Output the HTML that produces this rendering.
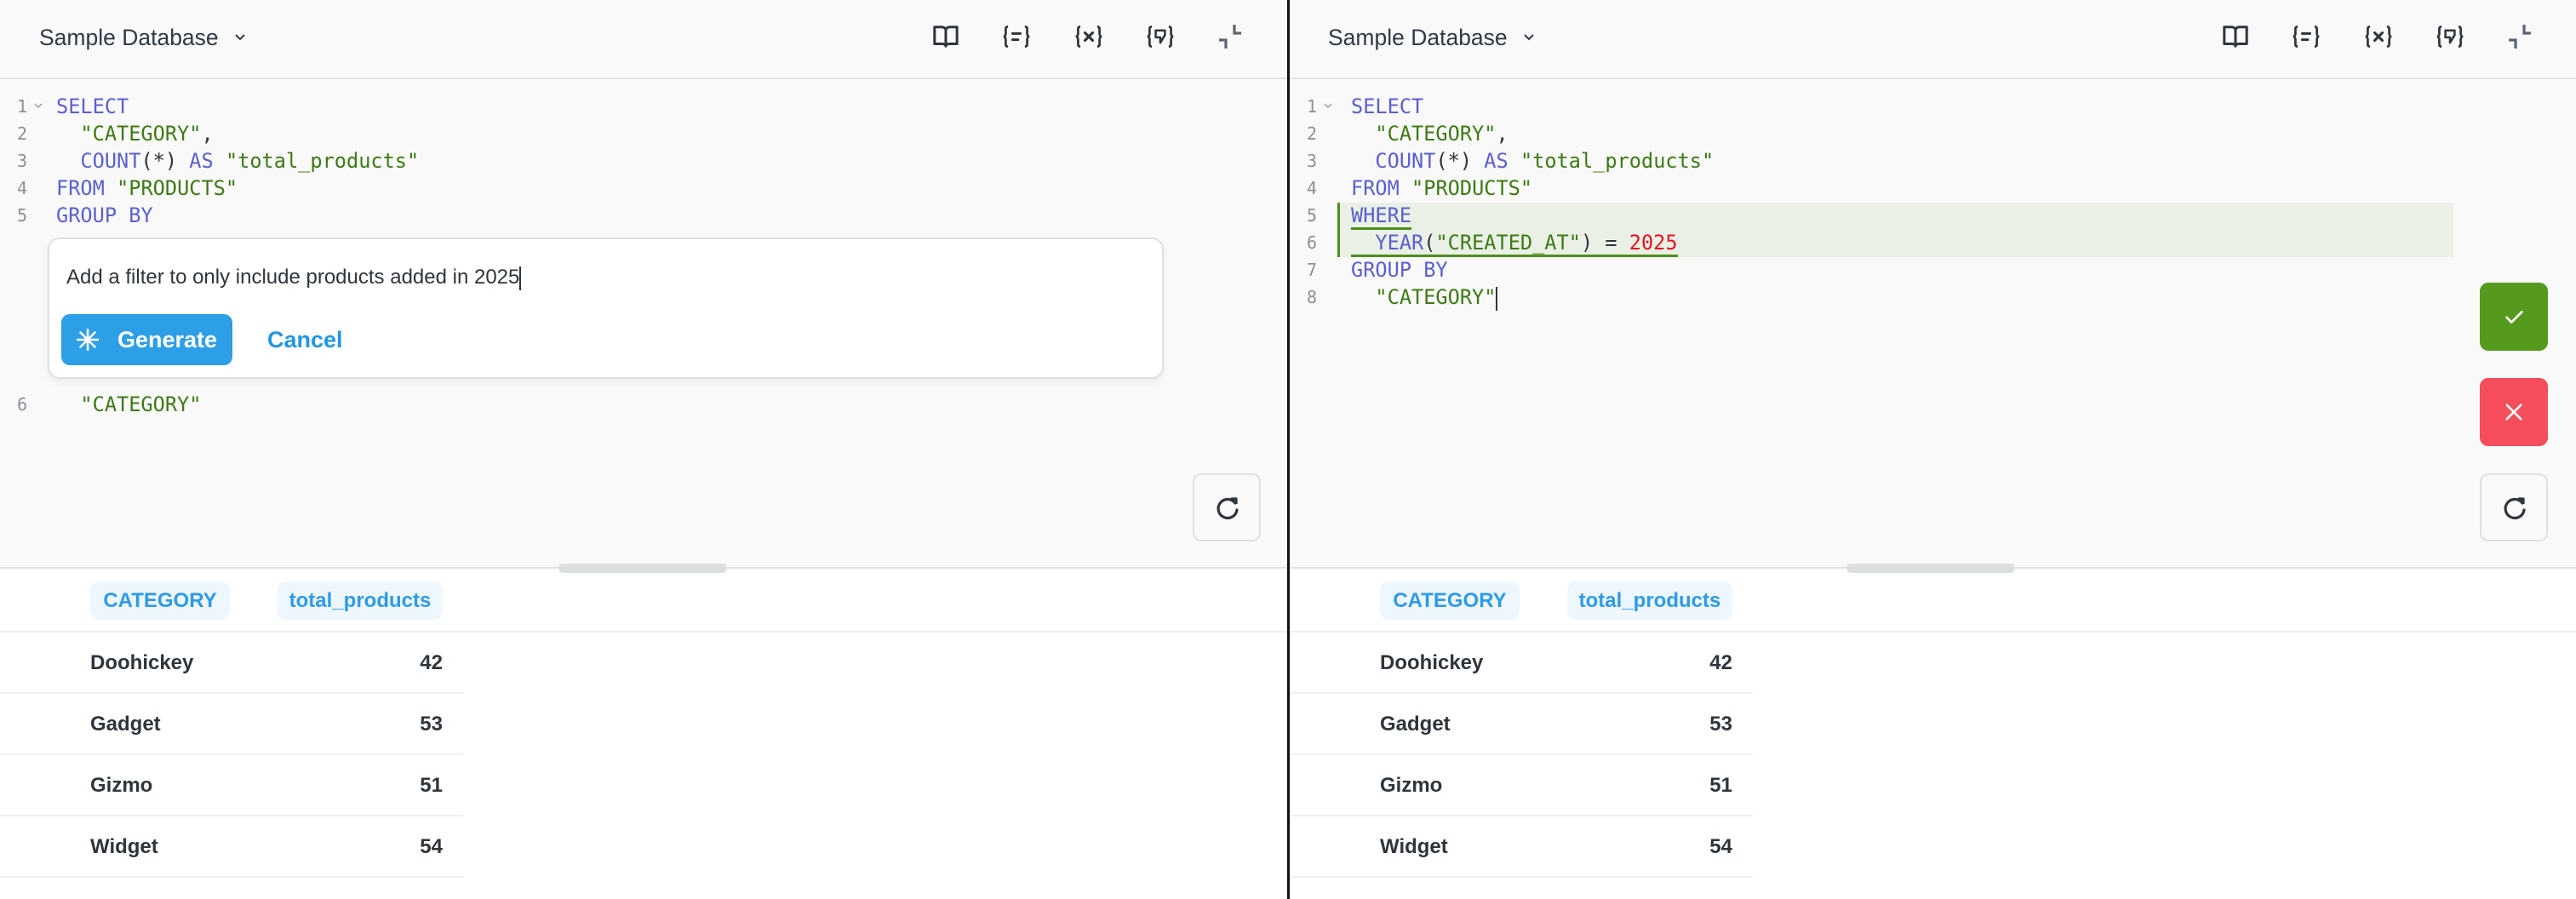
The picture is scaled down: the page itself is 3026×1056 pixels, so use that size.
<!DOCTYPE html>
<html><head><meta charset="utf-8">
<style>
*{margin:0;padding:0;box-sizing:border-box}
html,body{width:3026px;height:1056px;overflow:hidden;background:#fff;font-family:"Liberation Sans",sans-serif}
.panel{position:absolute;top:0;width:1512px;height:1056px;background:#fff;overflow:hidden}
.top{position:absolute;left:0;top:0;width:100%;height:668px;background:#f9f9f9;border-bottom:2px solid #e2e2e2}
.hdr{position:absolute;left:0;top:0;width:100%;height:93px;border-bottom:2px solid #e4e4e4}
.db{position:absolute;left:46px;top:27px;font-size:26.5px;color:#2e3a47;line-height:34px}
.db svg{position:absolute;left:229px;top:12px}
.ico{position:absolute;top:27px}
.code{position:absolute;left:0;top:109px;font-family:"DejaVu Sans Mono",monospace;font-size:23.6px}
.ln{position:absolute;height:32px;line-height:32px;white-space:pre}
.num{position:absolute;left:20px;width:20px;color:#8a9096;font-size:20px;line-height:32px}
.k{color:#5a5fd0}.s{color:#3d7a14}.p{color:#2e353b}.r{color:#e3121e}
.prompt{position:absolute;left:56px;top:279px;width:1311px;height:166px;background:#fff;border:2px solid #e0e0e0;border-radius:14px;box-shadow:0 4px 10px rgba(0,0,0,.06)}
.gen{position:absolute;left:14px;top:88px;width:201px;height:60px;background:#2d9fe6;border-radius:10px;color:#fff;font-size:27px;font-weight:bold;line-height:60px;padding-left:66px}
.gen svg{position:absolute;left:18px;top:17px}
.cancel{position:absolute;left:256px;top:88px;line-height:60px;font-size:27px;font-weight:bold;color:#2196e3}
.btn{position:absolute;width:80px;height:80px;border-radius:10px}
.refresh{background:#f9f9f9;border:2px solid #e0e0e0}
.handle{position:absolute;left:656px;top:662px;width:198px;height:11px;background:#dcdfe0;border-radius:6px}
.pill{position:absolute;top:683px;height:45px;background:#eef6fe;border-radius:10px;color:#2d9be6;font-weight:bold;font-size:24px;line-height:45px;text-align:center}
.hline{position:absolute;left:0;top:741px;width:100%;height:2px;background:#eeeeee}
.row{position:absolute;left:0;width:544px;height:72px;border-bottom:2px solid #f0f0f0;font-size:24px;font-weight:bold;color:#2e353b}
.row .a{position:absolute;left:106px;top:22px}
.row .b{position:absolute;right:24px;top:22px}
</style></head><body>

<!-- LEFT PANEL -->
<div class="panel" style="left:0">
 <div class="top">
  <div class="hdr">
   <div class="db">Sample Database<svg width="14" height="10" viewBox="0 0 14 10"><path d="M2 2l5 5 5-5" stroke="#2e3a47" stroke-width="2" fill="none"/></svg></div>
   <svg class="ico" style="left:1095px" width="32" height="32" viewBox="0 0 34 34"><path d="M3 5h9c3 0 5 2 5 4v20c0-2-2-3-5-3H3z M31 5h-9c-3 0-5 2-5 4v20c0-2 2-3 5-3h9z" stroke="#2e353b" stroke-width="3.2" fill="none" stroke-linejoin="round"/></svg>
   <svg class="ico" style="left:1176px" width="36" height="32" viewBox="0 0 40 34"><path d="M9 4c-2 0-3 1-3 3v6c0 2-1 4-3 4 2 0 3 2 3 4v6c0 2 1 3 3 3M31 4c2 0 3 1 3 3v6c0 2 1 4 3 4-2 0-3 2-3 4v6c0 2-1 3-3 3" stroke="#2e353b" stroke-width="3" fill="none"/><path d="M15 13h10M15 21h7" stroke="#2e353b" stroke-width="3.4" stroke-linecap="round"/></svg>
   <svg class="ico" style="left:1261px" width="36" height="32" viewBox="0 0 40 34"><path d="M9 4c-2 0-3 1-3 3v6c0 2-1 4-3 4 2 0 3 2 3 4v6c0 2 1 3 3 3M31 4c2 0 3 1 3 3v6c0 2 1 4 3 4-2 0-3 2-3 4v6c0 2-1 3-3 3" stroke="#2e353b" stroke-width="3" fill="none"/><path d="M15 12l10 10M25 12L15 22" stroke="#2e353b" stroke-width="3.4" stroke-linecap="round"/></svg>
   <svg class="ico" style="left:1345px" width="36" height="32" viewBox="0 0 40 34"><path d="M9 4c-2 0-3 1-3 3v6c0 2-1 4-3 4 2 0 3 2 3 4v6c0 2 1 3 3 3M31 4c2 0 3 1 3 3v6c0 2 1 4 3 4-2 0-3 2-3 4v6c0 2-1 3-3 3" stroke="#2e353b" stroke-width="3" fill="none"/><path d="M14 9h12v6l-6 10v-7h-6z" stroke="#2e353b" stroke-width="2.8" fill="none" stroke-linejoin="round"/></svg>
   <svg class="ico" style="left:1428px" width="34" height="34" viewBox="0 0 34 34"><path d="M22 2v10h8M4 20h8v10" stroke="#5b6670" stroke-width="3.2" fill="none"/></svg>
  </div>
  <div class="code">
   <div class="num" style="top:0">1</div><div class="num" style="top:32px">2</div><div class="num" style="top:64px">3</div><div class="num" style="top:96px">4</div><div class="num" style="top:128px">5</div><div class="num" style="top:350px">6</div>
   <svg style="position:absolute;left:40px;top:12px" width="10" height="8" viewBox="0 0 10 8"><path d="M1 1l4 4 4-4" stroke="#9aa0a6" stroke-width="1.5" fill="none"/></svg>
   <div class="ln" style="left:66px;top:0"><span class="k">SELECT</span></div>
   <div class="ln" style="left:66px;top:32px"><span class="s">  "CATEGORY"</span><span class="p">,</span></div>
   <div class="ln" style="left:66px;top:64px">  <span class="k">COUNT</span><span class="p">(*)</span> <span class="k">AS</span> <span class="s">"total_products"</span></div>
   <div class="ln" style="left:66px;top:96px"><span class="k">FROM</span> <span class="s">"PRODUCTS"</span></div>
   <div class="ln" style="left:66px;top:128px"><span class="k">GROUP BY</span></div>
   <div class="ln" style="left:66px;top:350px"><span class="s">  "CATEGORY"</span></div>
  </div>
  <div class="prompt">
   <div style="position:absolute;left:20px;top:28px;font-size:24px;color:#2e353b;line-height:34px">Add a filter to only include products added in 2025<span style="display:inline-block;width:2px;height:28px;background:#2e353b;vertical-align:middle"></span></div>
   <div class="gen"><svg width="26" height="26" viewBox="0 0 26 26"><path d="M13 1v24M1 13h24M4.5 4.5l17 17M21.5 4.5l-17 17" stroke="#fff" stroke-width="2.6" stroke-linecap="round"/></svg>Generate</div>
   <div class="cancel">Cancel</div>
  </div>
  <div class="btn refresh" style="left:1401px;top:556px"><svg style="position:absolute;left:24px;top:24px" width="30" height="30" viewBox="0 0 30 30"><path d="M24 9A11 11 0 1 0 26 17" stroke="#2e353b" stroke-width="3.2" fill="none" stroke-linecap="round"/><path d="M19 4l6 0 0 6" stroke="#2e353b" stroke-width="3.2" fill="none" stroke-linejoin="round"/></svg></div>
 </div>
 <div class="handle"></div>
 <div class="pill" style="left:106px;width:164px">CATEGORY</div>
 <div class="pill" style="left:326px;width:194px">total_products</div>
 <div class="hline"></div>
 <div class="row" style="top:743px"><span class="a">Doohickey</span><span class="b">42</span></div>
 <div class="row" style="top:815px"><span class="a">Gadget</span><span class="b">53</span></div>
 <div class="row" style="top:887px"><span class="a">Gizmo</span><span class="b">51</span></div>
 <div class="row" style="top:959px"><span class="a">Widget</span><span class="b">54</span></div>
</div>

<div style="position:absolute;left:1512px;top:0;width:3px;height:1056px;background:#111"></div>

<!-- RIGHT PANEL -->
<div class="panel" style="left:1515px;width:1511px">
 <div class="top">
  <div class="hdr">
   <div class="db" style="left:45px">Sample Database<svg width="14" height="10" viewBox="0 0 14 10"><path d="M2 2l5 5 5-5" stroke="#2e3a47" stroke-width="2" fill="none"/></svg></div>
   <svg class="ico" style="left:1095px" width="32" height="32" viewBox="0 0 34 34"><path d="M3 5h9c3 0 5 2 5 4v20c0-2-2-3-5-3H3z M31 5h-9c-3 0-5 2-5 4v20c0-2 2-3 5-3h9z" stroke="#2e353b" stroke-width="3.2" fill="none" stroke-linejoin="round"/></svg>
   <svg class="ico" style="left:1176px" width="36" height="32" viewBox="0 0 40 34"><path d="M9 4c-2 0-3 1-3 3v6c0 2-1 4-3 4 2 0 3 2 3 4v6c0 2 1 3 3 3M31 4c2 0 3 1 3 3v6c0 2 1 4 3 4-2 0-3 2-3 4v6c0 2-1 3-3 3" stroke="#2e353b" stroke-width="3" fill="none"/><path d="M15 13h10M15 21h7" stroke="#2e353b" stroke-width="3.4" stroke-linecap="round"/></svg>
   <svg class="ico" style="left:1261px" width="36" height="32" viewBox="0 0 40 34"><path d="M9 4c-2 0-3 1-3 3v6c0 2-1 4-3 4 2 0 3 2 3 4v6c0 2 1 3 3 3M31 4c2 0 3 1 3 3v6c0 2 1 4 3 4-2 0-3 2-3 4v6c0 2-1 3-3 3" stroke="#2e353b" stroke-width="3" fill="none"/><path d="M15 12l10 10M25 12L15 22" stroke="#2e353b" stroke-width="3.4" stroke-linecap="round"/></svg>
   <svg class="ico" style="left:1345px" width="36" height="32" viewBox="0 0 40 34"><path d="M9 4c-2 0-3 1-3 3v6c0 2-1 4-3 4 2 0 3 2 3 4v6c0 2 1 3 3 3M31 4c2 0 3 1 3 3v6c0 2 1 4 3 4-2 0-3 2-3 4v6c0 2-1 3-3 3" stroke="#2e353b" stroke-width="3" fill="none"/><path d="M14 9h12v6l-6 10v-7h-6z" stroke="#2e353b" stroke-width="2.8" fill="none" stroke-linejoin="round"/></svg>
   <svg class="ico" style="left:1428px" width="34" height="34" viewBox="0 0 34 34"><path d="M22 2v10h8M4 20h8v10" stroke="#5b6670" stroke-width="3.2" fill="none"/></svg>
  </div>
  <div style="position:absolute;left:56px;top:238px;width:1311px;height:64px;background:#eaf0e6;border-left:3px solid #4f8e1a"></div>
  <div class="code">
   <div class="num" style="top:0">1</div><div class="num" style="top:32px">2</div><div class="num" style="top:64px">3</div><div class="num" style="top:96px">4</div><div class="num" style="top:128px">5</div><div class="num" style="top:160px">6</div><div class="num" style="top:192px">7</div><div class="num" style="top:224px">8</div>
   <svg style="position:absolute;left:40px;top:12px" width="10" height="8" viewBox="0 0 10 8"><path d="M1 1l4 4 4-4" stroke="#9aa0a6" stroke-width="1.5" fill="none"/></svg>
   <div class="ln" style="left:72px;top:0"><span class="k">SELECT</span></div>
   <div class="ln" style="left:72px;top:32px"><span class="s">  "CATEGORY"</span><span class="p">,</span></div>
   <div class="ln" style="left:72px;top:64px">  <span class="k">COUNT</span><span class="p">(*)</span> <span class="k">AS</span> <span class="s">"total_products"</span></div>
   <div class="ln" style="left:72px;top:96px"><span class="k">FROM</span> <span class="s">"PRODUCTS"</span></div>
   <div class="ln" style="left:72px;top:128px"><span class="k" style="border-bottom:3px solid #4f8e1a">WHERE</span></div>
   <div class="ln" style="left:72px;top:160px"><span style="border-bottom:3px solid #4f8e1a">  <span class="k">YEAR</span><span class="p">(</span><span class="s">"CREATED_AT"</span><span class="p">) = </span><span class="r">2025</span></span></div>
   <div class="ln" style="left:72px;top:192px"><span class="k">GROUP BY</span></div>
   <div class="ln" style="left:72px;top:224px"><span class="s">  "CATEGORY"</span><span style="display:inline-block;width:2px;height:28px;background:#2e353b;vertical-align:middle"></span></div>
  </div>
  <div class="btn" style="left:1398px;top:332px;background:#559a1d"><svg style="position:absolute;left:26px;top:26px" width="28" height="28" viewBox="0 0 30 30"><path d="M6 16l6 6L25 9" stroke="#fff" stroke-width="2.8" fill="none" stroke-linecap="round" stroke-linejoin="round"/></svg></div>
  <div class="btn" style="left:1398px;top:444px;background:#f54d5c"><svg style="position:absolute;left:28px;top:28px" width="24" height="24" viewBox="0 0 26 26"><path d="M4 4l18 18M22 4L4 22" stroke="#fff" stroke-width="2.8" stroke-linecap="round"/></svg></div>
  <div class="btn refresh" style="left:1398px;top:556px"><svg style="position:absolute;left:24px;top:24px" width="30" height="30" viewBox="0 0 30 30"><path d="M24 9A11 11 0 1 0 26 17" stroke="#2e353b" stroke-width="3.2" fill="none" stroke-linecap="round"/><path d="M19 4l6 0 0 6" stroke="#2e353b" stroke-width="3.2" fill="none" stroke-linejoin="round"/></svg></div>
 </div>
 <div class="handle" style="left:654px"></div>
 <div class="pill" style="left:106px;width:164px">CATEGORY</div>
 <div class="pill" style="left:326px;width:194px">total_products</div>
 <div class="hline"></div>
 <div class="row" style="top:743px"><span class="a">Doohickey</span><span class="b">42</span></div>
 <div class="row" style="top:815px"><span class="a">Gadget</span><span class="b">53</span></div>
 <div class="row" style="top:887px"><span class="a">Gizmo</span><span class="b">51</span></div>
 <div class="row" style="top:959px"><span class="a">Widget</span><span class="b">54</span></div>
</div>
</body></html>
